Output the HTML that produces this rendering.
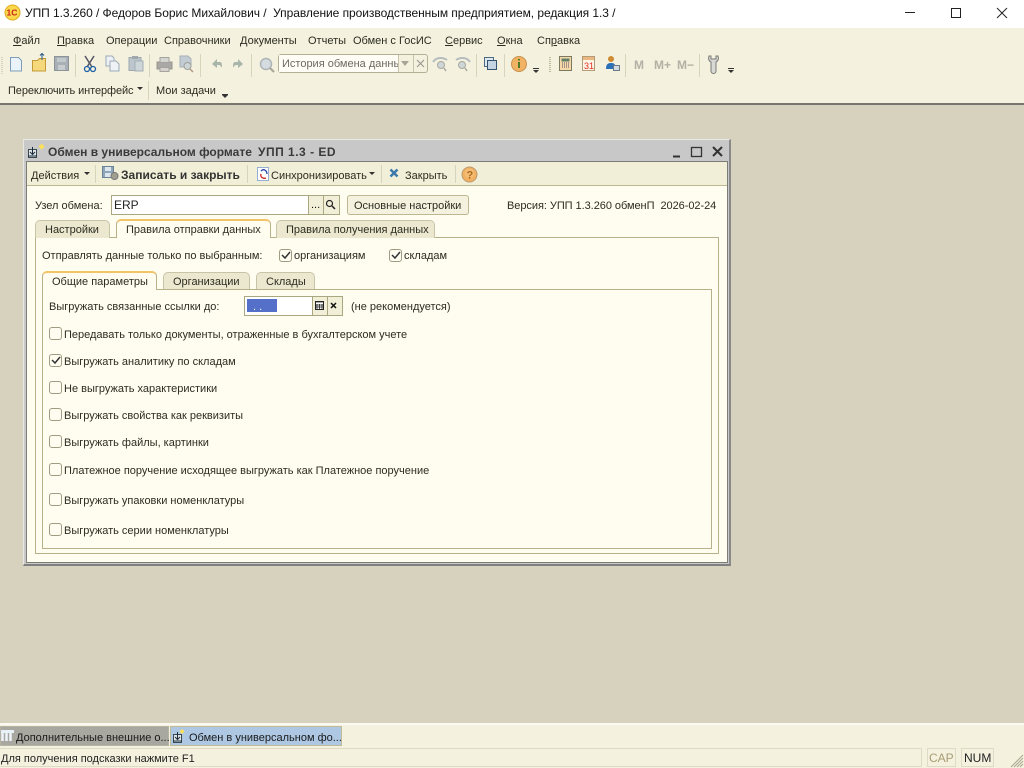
<!DOCTYPE html>
<html><head><meta charset="utf-8"><style>
html,body{margin:0;padding:0;width:1024px;height:768px;overflow:hidden;background:#d6d2bd;font-family:"Liberation Sans",sans-serif;font-size:11px;color:#2c2c20}
.a{position:absolute;box-sizing:border-box}
.t{position:absolute;white-space:nowrap;line-height:14px;height:14px;margin-top:1px}
.cb{position:absolute;width:13px;height:13px;box-sizing:border-box;border:1px solid #a09c84;border-radius:3px;background:#fffcf0}
.sep{position:absolute;width:1px;background:#d8d4bc}
svg{position:absolute;overflow:visible}
u{text-decoration:underline}
</style></head><body>
<!-- Title bar -->
<div class="a" style="left:0;top:0;width:1024px;height:28px;background:#fff"></div>
<svg style="left:4px;top:4px" width="17" height="17"><circle cx="8.500" cy="8.500" r="7.500" fill="#fbd84a" stroke="#e0a820"/><text x="2.500" y="11.500" font-size="8.500" font-weight="bold" fill="#c8201a" font-family="Liberation Sans">1С</text></svg>
<div class="t" style="left:25px;top:5px;font-size:12px;color:#111;letter-spacing:-.05px">УПП 1.3.260 / Федоров Борис Михайлович /&nbsp; Управление производственным предприятием, редакция 1.3 /</div>
<svg style="left:905px;top:7px" width="110" height="12"><path d="M0 5.500H10" stroke="#222" fill="none"/><rect x="46.500" y="1.500" width="9" height="9" fill="none" stroke="#222"/><path d="M92 1L102 11M102 1L92 11" stroke="#222" fill="none"/></svg>
<!-- Command area -->
<div class="a" style="left:0;top:28px;width:1024px;height:75px;background:#f4f1de"></div>
<div class="a" style="left:0;top:103px;width:1024px;height:2px;background:#77776f"></div>
<div class="t" style="left:13px;top:33px;"><u>Ф</u>айл</div>
<div class="t" style="left:57px;top:33px;"><u>П</u>равка</div>
<div class="t" style="left:106px;top:33px;">Операции</div>
<div class="t" style="left:164px;top:33px;">Справочники</div>
<div class="t" style="left:240px;top:33px;">Документы</div>
<div class="t" style="left:308px;top:33px;">Отчеты</div>
<div class="t" style="left:353px;top:33px;">Обмен с ГосИС</div>
<div class="t" style="left:445px;top:33px;"><u>С</u>ервис</div>
<div class="t" style="left:497px;top:33px;"><u>О</u>кна</div>
<div class="t" style="left:537px;top:33px;">Сп<u>р</u>авка</div>
<!-- Toolbar icons -->
<svg style="left:0;top:50px" width="1024" height="30">
<path d="M2 7v18" stroke="#bbb89f" stroke-dasharray="1 1"/>
<path d="M10.500 7.500h8l3 3v10.500h-11z" fill="#eaf2fa" stroke="#7f9db8"/>
<path d="M32.500 10.500h5l2-2h6v12.500h-13z" fill="#f5d77c" stroke="#c49a34"/><path d="M42 10V3.500M40 5.500l2-2 2 2" stroke="#2a5a8a" fill="none"/>
<rect x="54.500" y="6.500" width="14" height="14" fill="#a9b0b5" stroke="#8d9499"/><rect x="57" y="8" width="9" height="4" fill="#c3c8cb"/><rect x="58" y="15" width="7" height="5" fill="#c8cccf"/>
<path d="M75.500 4v23" stroke="#d8d4bc"/>
<path d="M85 6l7 11M94 6l-7 11" stroke="#556" stroke-width="1.500"/><circle cx="87" cy="19" r="2.500" fill="none" stroke="#1c60a8" stroke-width="1.300"/><circle cx="93" cy="19" r="2.500" fill="none" stroke="#1c60a8" stroke-width="1.300"/>
<path d="M106 6h6l2 2v8h-8z" fill="#eef2f5" stroke="#9cabb8"/><path d="M110 11h6l3 3v7h-9z" fill="#eef2f5" stroke="#9cabb8"/>
<rect x="129" y="7.500" width="12" height="13" fill="#bcc6cc" stroke="#9da8af"/><rect x="132" y="6" width="6" height="3" fill="#a0a8ad"/><rect x="135" y="11" width="8" height="10" fill="#cfd6da" stroke="#a3adb4"/>
<path d="M149.500 4v23" stroke="#d8d4bc"/>
<rect x="157" y="12" width="15" height="7" fill="#aaa8a4" stroke="#979590"/><rect x="160" y="7.500" width="9" height="5" fill="#d4d4d0" stroke="#a5a39f"/><rect x="160" y="17.500" width="9" height="4" fill="#d8d2cc" stroke="#a5a39f"/>
<path d="M180 6h8l3 3v8h-11z" fill="#c2ccd3" stroke="#a5afb6"/><circle cx="187.500" cy="16" r="3.500" fill="#ccd4d8" stroke="#a0a09a"/><path d="M190 19l3 3" stroke="#b09a80" stroke-width="1.500"/>
<path d="M200.500 4v23" stroke="#d8d4bc"/>
<path d="M212 14l5-5v3h3c2 0 2 3 2 6-1-2-2-3-4-3h-1v3z" fill="#a9b5aa"/>
<path d="M245 14l-5-5v3h-3c-2 0-2 3-2 6 1-2 2-3 4-3h1v3z" transform="translate(-2 0)" fill="#a9b5aa"/>
<path d="M251.500 4v23" stroke="#d8d4bc"/>
<circle cx="266" cy="14" r="5.500" fill="#d4dce0" stroke="#adb4b6" stroke-width="1.500"/><path d="M270 18l4 4" stroke="#aba79a" stroke-width="2.200"/>
<path d="M433 12c3-5 10-5 14-2" stroke="#b5bdbe" stroke-width="2" fill="none"/><circle cx="441" cy="15" r="3.500" fill="#cfd6d8" stroke="#a8a8a0"/><path d="M444 18l2 3" stroke="#a8a8a0" stroke-width="1.500"/>
<path d="M470 12c-3-5-10-5-14-2" stroke="#b5bdbe" stroke-width="2" fill="none"/><circle cx="462" cy="15" r="3.500" fill="#cfd6d8" stroke="#a8a8a0"/><path d="M465 18l2 3" stroke="#a8a8a0" stroke-width="1.500"/>
<path d="M476.500 4v23" stroke="#d8d4bc"/>
<rect x="484.500" y="7.500" width="9" height="9" fill="#dfe8ee" stroke="#4c6a84"/><rect x="487.500" y="10.500" width="9" height="9" fill="#c4d4e0" stroke="#33536e"/>
<path d="M504.500 4v23" stroke="#d8d4bc"/>
<circle cx="519" cy="14" r="7.500" fill="#f2b264" stroke="#c6924e"/><path d="M519 9v1.500M519 12v6" stroke="#4c7a26" stroke-width="2"/>
<path d="M533 20h6l-3 3z" fill="#333"/><rect x="533" y="18" width="6" height="1" fill="#333"/>
<path d="M550 7v15" stroke="#bbb89f" stroke-dasharray="1 1" stroke-width="2"/>
<rect x="559.500" y="6.500" width="12" height="14" fill="#f6d8a8" stroke="#7a7a60"/><rect x="561.500" y="8.500" width="8" height="3" fill="#60806a"/><path d="M562 13h8M562 15h8M562 17h8" stroke="#556" stroke-dasharray="1 1"/>
<rect x="582.500" y="6.500" width="12" height="14" fill="#fdf5e8" stroke="#b59a78"/><rect x="583" y="7" width="11" height="3" fill="#e8b880"/>
<circle cx="611" cy="9" r="3" fill="#d08a30"/><path d="M606 19c0-5 2-6 5-6s4 1 4 3v3z" fill="#2a70b8"/><rect x="613.500" y="15.500" width="6" height="5" fill="#d4dbe0" stroke="#6c7a88"/>
<path d="M625.500 4v23" stroke="#d8d4bc"/>
<path d="M699.500 4v23" stroke="#d8d4bc"/>
<path d="M709 6c-1 3 0 5 2 6v9a2.500 2.500 0 0 0 5 0v-9c2-1 3-3 2-6l-2 0v3h-5v-3z" fill="#d8d8d4" stroke="#7a7a76"/>
<path d="M728 20h6l-3 3z" fill="#333"/><rect x="728" y="18" width="6" height="1" fill="#333"/>
<text x="634" y="19" font-size="12" font-weight="bold" fill="#b4b0a4" font-family="Liberation Sans">M</text>
<text x="654" y="19" font-size="12" font-weight="bold" fill="#b4b0a4" font-family="Liberation Sans">M+</text>
<text x="677" y="19" font-size="12" font-weight="bold" fill="#b4b0a4" font-family="Liberation Sans">M−</text>
<text x="584" y="19" font-size="9" fill="#e03020" font-family="Liberation Sans">31</text>
</svg>
<!-- Search box -->
<div class="a" style="left:278px;top:54px;width:150px;height:19px;background:#f4f1de;border:1px solid #b5b094;border-radius:3px"></div>
<div class="a" style="left:279px;top:55px;width:119px;height:17px;background:#fffdf5;overflow:hidden"><div class="t" style="left:3px;top:1px;color:#6b6b60;">История обмена данных</div></div>
<div class="a" style="left:398px;top:55px;width:1px;height:17px;background:#c9c5ad"></div>
<div class="a" style="left:413px;top:55px;width:1px;height:17px;background:#c9c5ad"></div>
<svg style="left:401px;top:60px" width="24" height="10"><path d="M0 1h8l-4 5z" fill="#a9a596"/><path d="M16 0l7 7M23 0l-7 7" stroke="#9a9a92" stroke-width="1.200"/></svg>
<!-- Row 3 -->
<div class="t" style="left:8px;top:83px;letter-spacing:-.1px">Переключить интерфейс</div>
<svg style="left:137px;top:87px" width="6" height="4"><path d="M0 0h6l-3 3z" fill="#333"/></svg>
<div class="a" style="left:148px;top:81px;width:1px;height:19px;background:#d8d4bc"></div>
<div class="t" style="left:156px;top:83px;">Мои задачи</div>
<svg style="left:222px;top:94px" width="6" height="4"><path d="M0 0h6v1l-3 3-3-3z" fill="#333"/></svg>

<!-- Window -->
<div class="a" style="left:23px;top:139px;width:708px;height:427px;background:#c8c8c8;border:1px solid #e8e8e4;border-bottom:2px solid #808080;border-right:2px solid #8a8a8a"></div>
<svg style="left:27px;top:142px" width="18" height="18"><path d="M8 2l2.500 2-2.500 3-2.500-3z" fill="#fce15a" transform="translate(5 -.5) scale(1.200)"/><rect x="1.500" y="7.500" width="8" height="8" fill="#dfe6e8" stroke="#3a4650"/><path d="M5.500 5v7M3 10l2.500 2.500L8 10M1 14h9" stroke="#1a2a38" fill="none"/></svg>
<div class="t" style="left:48px;top:144px;font-weight:bold;color:#3a3a3a;font-size:12px;">Обмен в универсальном формате</div>
<div class="t" style="left:258px;top:144px;font-weight:bold;color:#3a3a3a;font-size:12px;letter-spacing:.5px">УПП 1.3 - ED</div>
<svg style="left:672px;top:145px" width="52" height="14"><path d="M1 11.500h7" stroke="#333" stroke-width="2"/><rect x="19.500" y="2.500" width="10" height="9" fill="none" stroke="#333" stroke-width="1.300"/><path d="M41 2l9 9M50 2l-9 9" stroke="#333" stroke-width="2"/></svg>
<!-- Window inner -->
<div class="a" style="left:26px;top:161px;width:702px;height:402px;background:#fffcf0;border:1px solid #7d7d78"></div>
<div class="a" style="left:27px;top:162px;width:700px;height:24px;background:#f2efd8;border-bottom:1px solid #bdb88f"></div>
<div class="t" style="left:31px;top:168px;">Действия</div>
<svg style="left:84px;top:172px" width="6" height="4"><path d="M0 0h6l-3 3z" fill="#333"/></svg>
<div class="sep" style="left:95px;top:165px;height:18px"></div>
<svg style="left:102px;top:165px" width="18" height="16"><rect x="0.500" y="1.500" width="11" height="11" fill="#8ea6ba" stroke="#6a8296"/><rect x="3" y="2" width="6" height="4" fill="#dde6ec"/><rect x="3" y="8" width="6" height="4" fill="#dde6ec"/><circle cx="12.500" cy="11" r="3.500" fill="#a0a090" stroke="#777"/></svg>
<div class="t" style="left:121px;top:167px;font-weight:bold;color:#333;font-size:12px">Записать и закрыть</div>
<div class="sep" style="left:247px;top:165px;height:18px"></div>
<svg style="left:256px;top:166px" width="15" height="15"><rect x="1.500" y="1.500" width="11" height="13" fill="#fff" stroke="#3868c0" stroke-dasharray="1 1"/><path d="M5 5c3-3 6 0 6 3" stroke="#2244aa" fill="none" stroke-width="1.300"/><path d="M10 12c-3 1-6-1-5-4" stroke="#cc2222" fill="none" stroke-width="1.300"/></svg>
<div class="t" style="left:271px;top:168px;">Синхронизировать</div>
<svg style="left:369px;top:172px" width="6" height="4"><path d="M0 0h6l-3 3z" fill="#333"/></svg>
<div class="sep" style="left:381px;top:165px;height:18px"></div>
<svg style="left:389px;top:168px" width="12" height="12"><path d="M1.500 1.500l7 7M8.500 1.500l-7 7" stroke="#3c78ac" stroke-width="2.500"/></svg>
<div class="t" style="left:405px;top:168px;">Закрыть</div>
<div class="sep" style="left:455px;top:165px;height:18px"></div>
<svg style="left:461px;top:166px" width="17" height="17"><circle cx="8.500" cy="8.500" r="7.500" fill="#f2b060" stroke="#b89a70"/><circle cx="8.500" cy="7.500" r="5" fill="#f8c888" opacity=".5"/><text x="5.500" y="12.500" font-size="11" font-weight="bold" fill="#a86a20" font-family="Liberation Sans">?</text></svg>

<!-- Node row -->
<div class="t" style="left:35px;top:198px;">Узел обмена:</div>
<div class="a" style="left:111px;top:195px;width:229px;height:20px;background:#fff;border:1px solid #aaa680"></div>
<div class="t" style="left:114px;top:197px;color:#222;font-size:12px">ERP</div>
<div class="a" style="left:308px;top:196px;width:15px;height:18px;background:#f2efd8;border-left:1px solid #aaa680"></div>
<div class="a" style="left:323px;top:196px;width:16px;height:18px;background:#f2efd8;border-left:1px solid #aaa680"></div>
<div class="t" style="left:311px;top:197px;color:#111;font-size:11px">...</div>
<svg style="left:325px;top:199px" width="12" height="11"><circle cx="4.500" cy="4.500" r="3" fill="none" stroke="#222" stroke-width="1.200"/><path d="M7 7l3 3" stroke="#222" stroke-width="1.500"/></svg>
<div class="a" style="left:347px;top:195px;width:122px;height:20px;background:#f4f1de;border:1px solid #bdb88f;border-radius:3px"></div>
<div class="t" style="left:354px;top:198px;">Основные настройки</div>
<div class="t" style="left:507px;top:198px;letter-spacing:-.05px">Версия: УПП 1.3.260 обменП&nbsp; 2026-02-24</div>

<!-- Outer tabs -->
<div class="a" style="left:35px;top:237px;width:684px;height:317px;border:1px solid #b8b088;background:#fffcf0"></div>
<div class="a" style="left:35px;top:220px;width:75px;height:18px;background:#ece8d0;border:1px solid #c8c4a8;border-bottom:none;border-radius:5px 5px 0 0"></div>
<div class="t" style="left:45px;top:222px;">Настройки</div>
<div class="a" style="left:116px;top:219px;width:155px;height:19px;background:#fffcf0;border:1px solid #b8b088;border-bottom:none;border-top:2px solid #f2c468;border-radius:5px 5px 0 0"></div>
<div class="t" style="left:126px;top:222px;">Правила отправки данных</div>
<div class="a" style="left:276px;top:220px;width:159px;height:18px;background:#ece8d0;border:1px solid #c8c4a8;border-bottom:none;border-radius:5px 5px 0 0"></div>
<div class="t" style="left:286px;top:222px;">Правила получения данных</div>

<div class="t" style="left:42px;top:248px;">Отправлять данные только по выбранным:</div>
<div class="cb" style="left:279px;top:249px"></div>
<svg style="left:281px;top:251px" width="10" height="9"><path d="M1 4l3 3 5-6" stroke="#333" stroke-width="1.500" fill="none"/></svg>
<div class="t" style="left:294px;top:248px;">организациям</div>
<div class="cb" style="left:389px;top:249px"></div>
<svg style="left:391px;top:251px" width="10" height="9"><path d="M1 4l3 3 5-6" stroke="#333" stroke-width="1.500" fill="none"/></svg>
<div class="t" style="left:404px;top:248px;">складам</div>

<!-- Inner tabs -->
<div class="a" style="left:42px;top:289px;width:670px;height:260px;border:1px solid #b8b088;background:#fffcf0"></div>
<div class="a" style="left:42px;top:271px;width:115px;height:19px;background:#fffcf0;border:1px solid #b8b088;border-bottom:none;border-top:2px solid #f2c468;border-radius:5px 5px 0 0"></div>
<div class="t" style="left:52px;top:274px;">Общие параметры</div>
<div class="a" style="left:163px;top:272px;width:87px;height:17px;background:#ece8d0;border:1px solid #c8c4a8;border-bottom:none;border-radius:5px 5px 0 0"></div>
<div class="t" style="left:173px;top:274px;">Организации</div>
<div class="a" style="left:256px;top:272px;width:59px;height:17px;background:#ece8d0;border:1px solid #c8c4a8;border-bottom:none;border-radius:5px 5px 0 0"></div>
<div class="t" style="left:266px;top:274px;">Склады</div>

<div class="t" style="left:49px;top:299px;">Выгружать связанные ссылки до:</div>
<div class="a" style="left:244px;top:296px;width:99px;height:20px;background:#fff;border:1px solid #aaa680"></div>
<div class="a" style="left:247px;top:299px;width:30px;height:13px;background:#5570c8"></div>
<div class="t" style="left:253px;top:299px;color:#fff">. .</div>
<div class="a" style="left:312px;top:297px;width:15px;height:18px;background:#f2efd8;border-left:1px solid #aaa680"></div>
<div class="a" style="left:327px;top:297px;width:15px;height:18px;background:#f2efd8;border-left:1px solid #aaa680"></div>
<svg style="left:314px;top:300px" width="26" height="11"><rect x="1.500" y="1.500" width="8" height="8" fill="#fff" stroke="#222"/><path d="M1 2h9M3 4v5M5.500 4v5M8 4v5M2 5h7M2 7h7" stroke="#222" stroke-width=".8"/><path d="M17 3l5 5M22 3l-5 5" stroke="#111" stroke-width="1.500"/></svg>
<div class="t" style="left:351px;top:299px;">(не рекомендуется)</div>

<div class="cb" style="left:49px;top:327px"></div>
<div class="t" style="left:64px;top:327px;">Передавать только документы, отраженные в бухгалтерском учете</div>
<div class="cb" style="left:49px;top:354px"></div>
<svg style="left:51px;top:356px" width="10" height="9"><path d="M1 4l3 3 5-6" stroke="#333" stroke-width="1.500" fill="none"/></svg>
<div class="t" style="left:64px;top:354px;">Выгружать аналитику по складам</div>
<div class="cb" style="left:49px;top:381px"></div>
<div class="t" style="left:64px;top:381px;">Не выгружать характеристики</div>
<div class="cb" style="left:49px;top:408px"></div>
<div class="t" style="left:64px;top:408px;">Выгружать свойства как реквизиты</div>
<div class="cb" style="left:49px;top:435px"></div>
<div class="t" style="left:64px;top:435px;">Выгружать файлы, картинки</div>
<div class="cb" style="left:49px;top:463px"></div>
<div class="t" style="left:64px;top:463px;">Платежное поручение исходящее выгружать как Платежное поручение</div>
<div class="cb" style="left:49px;top:493px"></div>
<div class="t" style="left:64px;top:493px;">Выгружать упаковки номенклатуры</div>
<div class="cb" style="left:49px;top:523px"></div>
<div class="t" style="left:64px;top:523px;">Выгружать серии номенклатуры</div>

<!-- Bottom -->
<div class="a" style="left:0;top:723px;width:1024px;height:45px;background:#f4f1de;border-top:2px solid #fbfaf2"></div>
<div class="a" style="left:0;top:726px;width:169px;height:20px;background:#a9a8a0;border:1px solid #b5b3a4"></div>
<svg style="left:1px;top:730px" width="13" height="12"><rect x="0" y="0" width="13" height="3" fill="#e8f0f8"/><path d="M1.500 3v8M5.500 3v8M9.500 3v8" stroke="#eef4fa" stroke-width="2.500"/></svg>
<div class="t" style="left:16px;top:730px;color:#1a1a1a">Дополнительные внешние о...</div>
<div class="a" style="left:170px;top:726px;width:172px;height:20px;background:#aec8e4;border:1px solid #c0bc98"></div>
<svg style="left:172px;top:728px" width="16" height="16"><path d="M10 1l2.500 2.500L10 6 7.500 3.500z" fill="#fce15a"/><rect x="1.500" y="6.500" width="8" height="8" fill="#dfe6e8" stroke="#3a4650"/><path d="M5.500 4v7M3 9l2.500 2.500L8 9M1 13h9" stroke="#1a2a38" fill="none"/></svg>
<div class="t" style="left:189px;top:730px;color:#1a1a1a">Обмен в универсальном фо...</div>
<div class="a" style="left:-1px;top:748px;width:923px;height:19px;border:1px solid #dedbc5"></div>
<div class="t" style="left:1px;top:751px;color:#222">Для получения подсказки нажмите F1</div>
<div class="a" style="left:927px;top:748px;width:29px;height:19px;border:1px solid #dedbc5"></div>
<div class="t" style="left:929px;top:750px;color:#a89c74;font-size:12px">CAP</div>
<div class="a" style="left:961px;top:748px;width:33px;height:19px;border:1px solid #dedbc5"></div>
<div class="t" style="left:964px;top:750px;color:#222;font-size:12px">NUM</div>
<svg style="left:1010px;top:754px" width="14" height="14"><path d="M13 1L1 13M13 4L4 13M13 7L7 13M13 10L10 13" stroke="#a8a68e"/></svg>
</body></html>
